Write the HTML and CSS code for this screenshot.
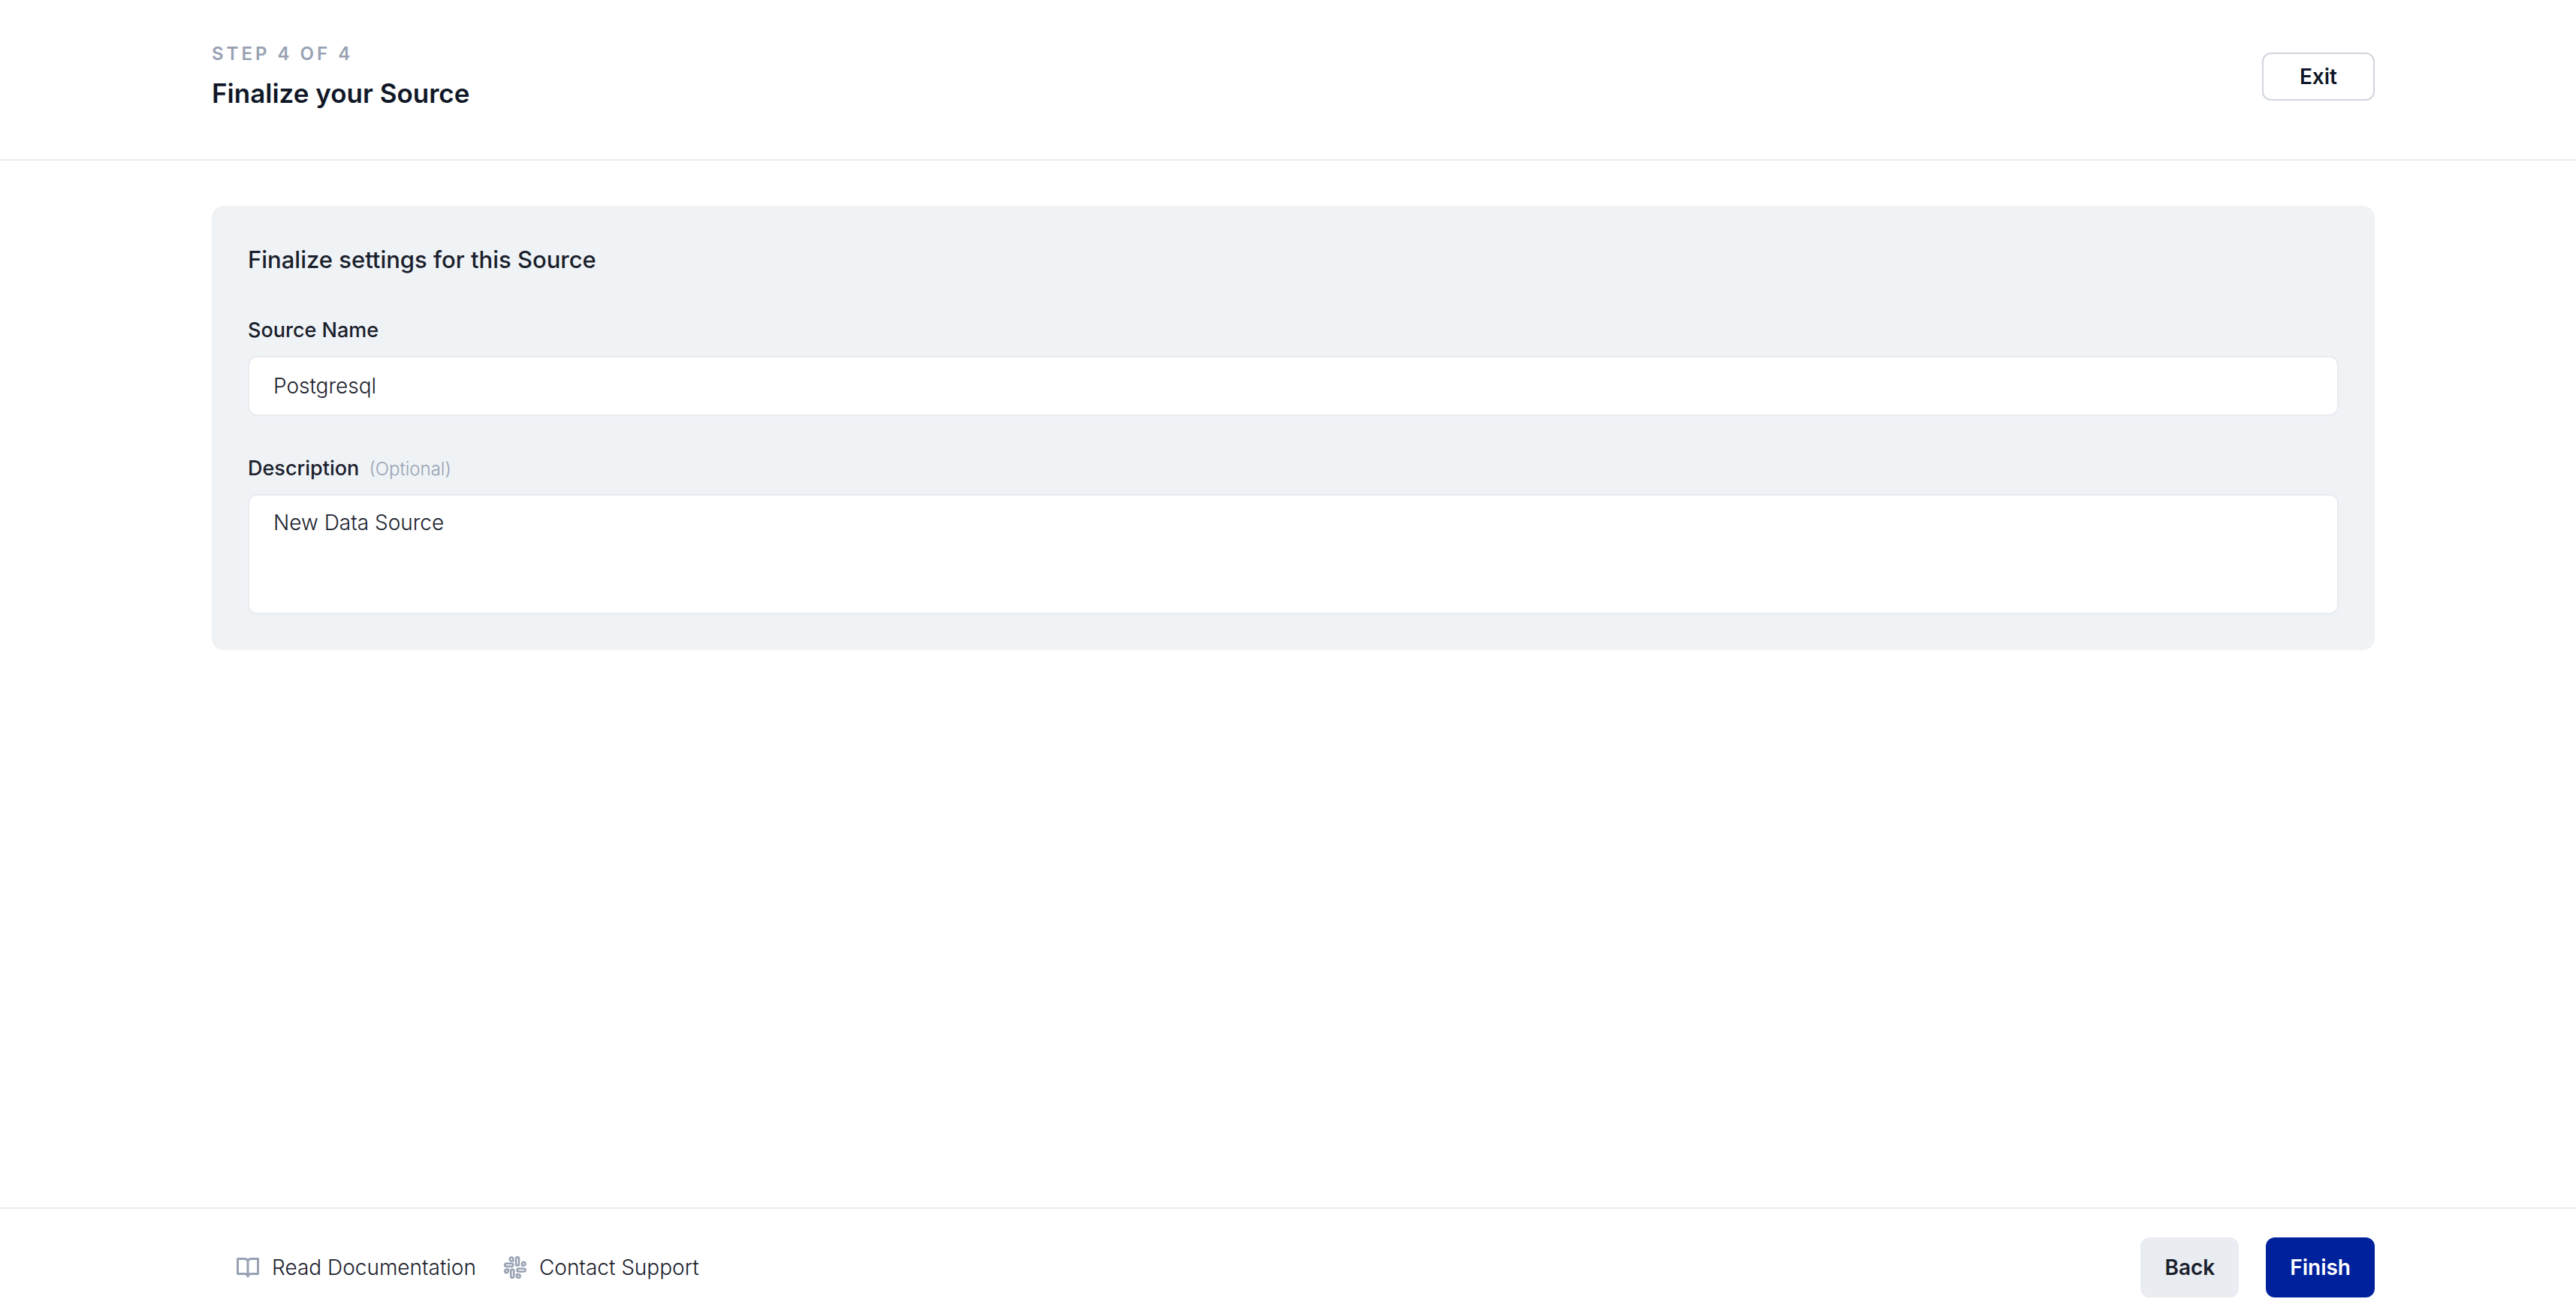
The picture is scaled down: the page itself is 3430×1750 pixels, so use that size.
FILE: index.html
```
<!DOCTYPE html>
<html lang="en">
	<head>
		<meta charset="UTF-8">
		<title>Finalize your Source</title>
		<link rel="stylesheet" href="styles.css">
	</head>
	<body>
		<header class="header">
			<div class="container header-inner">
				<div class="heading">
					<p class="step">STEP 4 OF 4</p>
					<h1 class="title">Finalize your Source</h1>
				</div>
				<button type="button" class="btn btn-exit">Exit</button>
			</div>
		</header>
		<main class="main">
			<div class="container">
				<form class="card" id="source-form">
					<h2 class="card-title">Finalize settings for this Source</h2>
					<div class="field">
						<label class="label" for="name">Source Name</label>
						<input class="control" type="text" id="name" value="Postgresql">
					</div>
					<div class="field">
						<label class="label" for="description">Description <span class="optional">(Optional)</span></label>
						<textarea class="control textarea" id="description">New Data Source</textarea>
					</div>
				</form>
			</div>
		</main>
		<footer class="footer">
			<div class="container footer-inner">
				<nav class="links">
					<a href="#" class="link">
						<svg class="icon" viewBox="0 0 32 32">
							<path d="M16 7C15 5 13 4.500 11 4.500H2.500V24.500H12C14 24.500 15.400 25.500 16 28C16.600 25.500 18 24.500 20 24.500H29.500V4.500H21C19 4.500 17 5 16 7V28"/>
						</svg>
						Read Documentation
					</a>
					<a href="#" class="link">
						<svg class="icon icon-slack" viewBox="0 0 32 32">
							<path d="M13.200 7.500V4.900A2.200 2.500 0 1 0 11 7.500Z"/>
							<rect x="17" y="2.200" width="4" height="11.300" rx="2"/>
							<path d="M25 13.500V11.300A2.300 2.300 0 1 1 27.300 13.500Z"/>
							<rect x="2.200" y="10.700" width="11" height="4" rx="2"/>
							<rect x="18.500" y="17.500" width="11" height="4" rx="2"/>
							<path d="M6.800 18.500H4.500A2.300 2.300 0 1 0 6.800 20.800Z"/>
							<rect x="10.200" y="18.500" width="4" height="11.300" rx="2"/>
							<path d="M18 25.200H20.300A2.300 2.300 0 1 1 18 27.500Z"/>
						</svg>
						Contact Support
					</a>
				</nav>
				<div class="actions">
					<button type="button" class="btn btn-back">Back</button>
					<button type="submit" class="btn btn-finish" form="source-form">Finish</button>
				</div>
			</div>
		</footer>
	</body>
</html>
```
FILE: styles.css
```
* { margin: 0; padding: 0; box-sizing: border-box;}
body { display: flex; flex-direction: column; min-height: 100vh; background: #fff; color: #1a202c; font-family: Inter, "Liberation Sans", sans-serif; font-size: 28px; line-height: 40px;}
.container { width: 100%; max-width: 2880px; margin: 0 auto;}
.header, .main, .footer { padding-left: 14px;}

.header { padding-top: 52px; padding-bottom: 60px; border-bottom: 2px solid #e8ecf1;}
.header-inner { display: flex; justify-content: space-between; align-items: center;}
.step { font-size: 24px; line-height: 40px; font-weight: 600; letter-spacing: 4px; color: #98a2b3;}
.title { margin-top: 4px; font-size: 35px; line-height: 56px; font-weight: 600; color: #101828;}

.btn { border: none; border-radius: 12px; padding: 0 32px; height: 80px; font-family: inherit; font-size: 28px; line-height: 40px; font-weight: 600; cursor: pointer;}
.btn-exit { height: 64px; padding: 0 48px; border: 2px solid #d0d5dd; background: #fff; color: #101828;}
.btn-back { background: #e9ecf1; color: #1a202c;}
.btn-finish { background: #00219c; color: #fff;}

.main { flex: 1; padding-top: 60px;}
.card { display: flex; flex-direction: column; gap: 48px; padding: 48px; border-radius: 16px; background: #eff3f6;}
.card-title { font-size: 31px; line-height: 48px; font-weight: 500;}
.field { display: flex; flex-direction: column; gap: 12px;}
.label { font-size: 27px; line-height: 44px; font-weight: 500;}
.optional { margin-left: 6px; font-size: 24px; line-height: 24px; font-weight: 300; color: #98a2b3;}
.control { width: 100%; height: 80px; padding: 0 32px; border: 2px solid #e8ebf0; border-radius: 12px; background: #fff; color: inherit; font-family: inherit; font-size: 28px; line-height: 40px; font-weight: 300;}
.textarea { display: block; height: 160px; padding-top: 16px; padding-bottom: 16px; resize: none;}

.footer { padding-top: 38px; padding-bottom: 22px; border-top: 2px solid #e8ecf1;}
.footer-inner { display: flex; justify-content: space-between; align-items: center;}
.links { display: flex; gap: 36px; padding-left: 32px; font-weight: 300;}
.link { display: flex; align-items: center; gap: 16px; color: inherit; text-decoration: none;}
.icon { width: 32px; height: 32px; fill: none; stroke: #98a2b3; stroke-width: 3; stroke-linejoin: round;}
.icon-slack { stroke-width: 2.6;}
.actions { display: flex; gap: 36px;}
```
